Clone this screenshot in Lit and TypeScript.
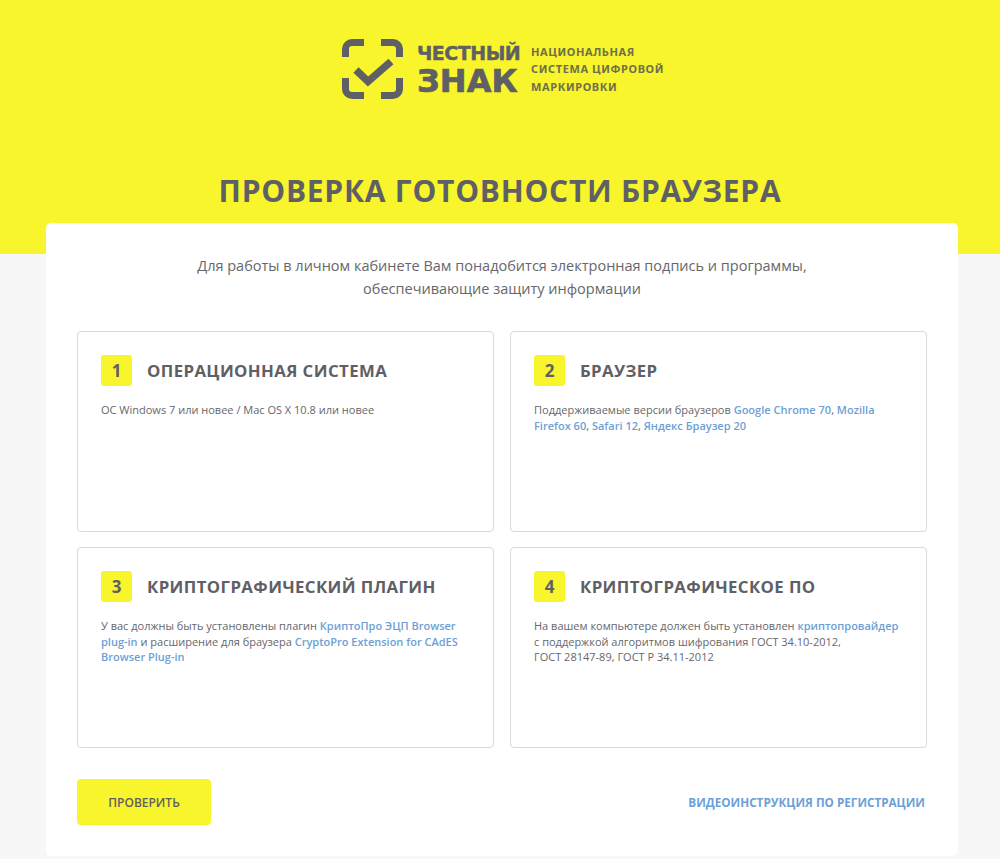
import { LitElement, html, css } from "lit";
import { customElement } from "lit/decorators.js";

@customElement("app-root")
export class AppRoot extends LitElement {
  static styles = css`
    :host {
      display: block;
      height: 859px;
      overflow: hidden;
      box-sizing: border-box;
      background: linear-gradient(#f8f52c 254px, #f7f7f7 254px);
      font-family: "Open Sans", "Noto Sans", sans-serif;
      color: #5f6065;
    }
    .logo {
      height: 62px;
      padding: 38px 0 0 5px;
      display: flex;
      justify-content: center;
      align-items: center;
      gap: 12px;
    }
    .mark { width: 63px; height: 62px; margin-right: 1px; flex: none; }
    .brand {
      font-family: "DejaVu Sans", sans-serif;
      font-weight: 700;
      color: #5f6065;
      display: flex;
      flex-direction: column;
      line-height: 1;
      width: 102px;
    }
    .brand .a { font-size: 19px; letter-spacing: -0.5px; line-height: 24px; -webkit-text-stroke: 0.4px #5f6065; white-space: nowrap; }
    .brand .b { font-size: 32px; letter-spacing: 0.1px; line-height: 32px; -webkit-text-stroke: 0.7px #5f6065; white-space: nowrap; }
    .tag {
      font-family: "Noto Sans", sans-serif;
      font-weight: 700;
      font-size: 11px;
      letter-spacing: 0.6px;
      line-height: 17.5px;
      color: #6f6f4a;
      white-space: nowrap;
    }
    h1 {
      margin: 0;
      padding-top: 69px;
      height: 54px;
      line-height: 44px;
      text-align: center;
      font-size: 30px;
      font-weight: 700;
      letter-spacing: 0.75px;
      color: #5f6065;
    }
    .card {
      box-sizing: border-box;
      margin: 0 42px 0 46px;
      height: 633px;
      background: #fff;
      border-radius: 5px;
      padding: 31px 31px 0;
    }
    .intro {
      margin: 0 0 31px;
      text-align: center;
      font-size: 14.5px;
      line-height: 23px;
      color: #66676b;
    }
    .grid {
      display: grid;
      grid-template-columns: 417px 417px;
      grid-auto-rows: 201px;
      gap: 15px 16px;
    }
    .box {
      box-sizing: border-box;
      border: 1px solid #d9d9d9;
      border-radius: 4px;
      padding: 23px 23px 0;
    }
    .head { display: flex; align-items: center; gap: 15px; height: 31px; margin-bottom: 16px; }
    .num {
      width: 31px;
      height: 31px;
      background: #f8f52c;
      border-radius: 3px;
      display: flex;
      align-items: center;
      justify-content: center;
      font-size: 17px;
      font-weight: 700;
      color: #5f6065;
    }
    h2 {
      margin: 0;
      font-size: 16.8px;
      font-weight: 700;
      letter-spacing: 0.4px;
      color: #5f6065;
    }
    .text {
      margin: 0;
      font-size: 11px;
      line-height: 15.5px;
      color: #66676b;
    }
    a { color: #6d9fd6; font-weight: 600; text-decoration: none; }
    .foot {
      display: flex;
      justify-content: space-between;
      align-items: center;
      margin-top: 31px;
    }
    .btn {
      width: 134px;
      height: 46px;
      border: none;
      border-radius: 4px;
      background: #f8f52c;
      font-family: inherit;
      font-size: 12px;
      font-weight: 600;
      color: #5f6065;
    }
    .video { font-size: 11.7px; font-weight: 700; margin-right: 2px; }
  `;

  render() {
    return html`
      <div class="logo">
        <svg class="mark" viewBox="0 0 63 62" fill="none" stroke="#5f6065" stroke-width="7">
          <path d="M23 4.500H11a6.500 6.500 0 0 0-6.500 6.500v8M40 4.500h12a6.500 6.500 0 0 1 6.500 6.500v8M4.500 40v11a6.500 6.500 0 0 0 6.500 6.500h12M58.500 40v11a6.500 6.500 0 0 1-6.500 6.500H40" />
          <path d="M15 32l12 11.500 23-20" stroke-width="7.500" />
        </svg>
        <div class="brand"><span class="a">ЧЕСТНЫЙ</span><span class="b">ЗНАК</span></div>
        <div class="tag">НАЦИОНАЛЬНАЯ<br />СИСТЕМА ЦИФРОВОЙ<br />МАРКИРОВКИ</div>
      </div>
      <h1>ПРОВЕРКА ГОТОВНОСТИ БРАУЗЕРА</h1>
      <div class="card">
        <p class="intro">Для работы в личном кабинете Вам понадобится электронная подпись и программы,<br />обеспечивающие защиту информации</p>
        <div class="grid">
          <div class="box">
            <div class="head"><div class="num">1</div><h2>ОПЕРАЦИОННАЯ СИСТЕМА</h2></div>
            <p class="text">ОС Windows 7 или новее / Mac OS X 10.8 или новее</p>
          </div>
          <div class="box">
            <div class="head"><div class="num">2</div><h2>БРАУЗЕР</h2></div>
            <p class="text">Поддерживаемые версии браузеров <a href="#">Google Chrome 70</a>, <a href="#">Mozilla<br />Firefox 60</a>, <a href="#">Safari 12</a>, <a href="#">Яндекс Браузер 20</a></p>
          </div>
          <div class="box">
            <div class="head"><div class="num">3</div><h2>КРИПТОГРАФИЧЕСКИЙ ПЛАГИН</h2></div>
            <p class="text">У вас должны быть установлены плагин <a href="#">КриптоПро ЭЦП Browser<br />plug-in</a> и расширение для браузера <a href="#">CryptoPro Extension for CAdES<br />Browser Plug-in</a></p>
          </div>
          <div class="box">
            <div class="head"><div class="num">4</div><h2>КРИПТОГРАФИЧЕСКОЕ ПО</h2></div>
            <p class="text">На вашем компьютере должен быть установлен <a href="#">криптопровайдер</a><br />с поддержкой алгоритмов шифрования ГОСТ 34.10-2012,<br />ГОСТ 28147-89, ГОСТ Р 34.11-2012</p>
          </div>
        </div>
        <div class="foot">
          <button class="btn">ПРОВЕРИТЬ</button>
          <a class="video" href="#">ВИДЕОИНСТРУКЦИЯ ПО РЕГИСТРАЦИИ</a>
        </div>
      </div>
    `;
  }
}
